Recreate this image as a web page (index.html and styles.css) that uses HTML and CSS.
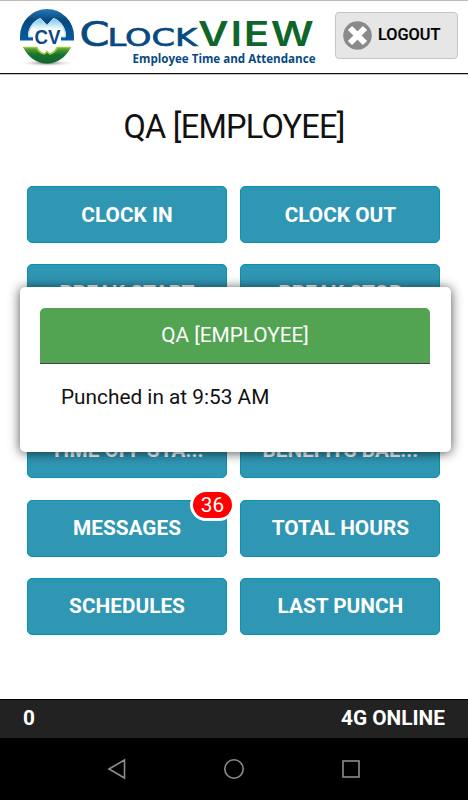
FILE: index.html
```html
<!DOCTYPE html>
<html lang="en">
<head>
  <meta charset="utf-8">
  <title>ClockVIEW</title>
  <link rel="stylesheet" href="styles.css">
</head>
<body>

  <header class="header">
    <svg class="logo" width="310" height="72" viewBox="0 0 310 72">
      <defs>
        <linearGradient id="blue" x1="0" y1="0" x2="0" y2="1">
          <stop offset="0" stop-color="#2878b5"/>
          <stop offset="0.35" stop-color="#07487f"/>
          <stop offset="1" stop-color="#075ba0"/>
        </linearGradient>
        <linearGradient id="glow" x1="0" y1="0" x2="0" y2="1">
          <stop offset="0" stop-color="#6dc3ee"/>
          <stop offset="0.6" stop-color="#fff"/>
        </linearGradient>
        <linearGradient id="green" x1="0" y1="0" x2="0" y2="1">
          <stop offset="0" stop-color="#6fae35"/>
          <stop offset="0.45" stop-color="#187331"/>
          <stop offset="1" stop-color="#11652b"/>
        </linearGradient>
        <radialGradient id="shade">
          <stop offset="0" stop-color="#666"/>
          <stop offset="1" stop-color="#fff" stop-opacity="0"/>
        </radialGradient>
      </defs>
      <ellipse cx="38" cy="62" rx="28" ry="3.5" fill="url(#shade)"/>
      <path d="M11 39.500V35A27 27 0 0 1 65 35V39.500H52V36H57A19 19 0 0 0 44.500 17L38 24L31.500 17A19 19 0 0 0 19 36H24V39.500Z" fill="url(#blue)"/>
      <path d="M24 36H19.500A18.500 19 0 0 1 31.500 17.500L38 24.500L44.500 17.500A18.500 19 0 0 1 56.500 36H52" fill="url(#glow)" stroke="#a5d8f3" stroke-width="1"/>
      <path d="M14 46H28Q31 52 35.500 52.500L38 50L40.500 52.500Q45 52 48 46H62Q54 62 38 62.500Q22 62 14 46Z" fill="url(#green)"/>
      <path d="M14.500 46.500H27.500Q31 52.500 35.500 53L38 50.500L40.500 53Q45 52.500 48.500 46.500H61.500" fill="none" stroke="#9ccb35" stroke-width="1.500"/>
      <text class="logo-cv" x="25.500" y="42.800" textLength="26" lengthAdjust="spacingAndGlyphs">CV</text>
      <text class="logo-clock" x="70.500" y="45" font-size="34" textLength="30" lengthAdjust="spacingAndGlyphs">C</text>
      <text class="logo-clock" x="98.500" y="45" font-size="25.500" textLength="89.500" lengthAdjust="spacingAndGlyphs">LOCK</text>
      <text class="logo-view" transform="scale(1.22 1)" x="155 181.500 192.500 214.500" y="45">VIEW</text>
      <text class="logo-tag" x="123.500" y="61.500" textLength="183" lengthAdjust="spacingAndGlyphs">Employee Time and Attendance</text>
    </svg>
    <button class="logout">
      <svg width="29" height="29" viewBox="0 0 29 29">
        <circle cx="14.500" cy="14.500" r="14.300" fill="#8a8a8a"/>
        <path d="M7 7L22 22M22 7L7 22" stroke="#fff" stroke-width="6"/>
      </svg>
      <span>LOGOUT</span>
    </button>
  </header>

  <main class="content">
    <h1 class="title">QA [EMPLOYEE]</h1>
    <div class="buttons">
      <button class="btn">CLOCK IN</button>
      <button class="btn">CLOCK OUT</button>
      <button class="btn">BREAK START</button>
      <button class="btn">BREAK STOP</button>
      <button class="btn">LUNCH START</button>
      <button class="btn">LUNCH STOP</button>
      <button class="btn">TIME OFF STA...</button>
      <button class="btn">BENEFITS BAL...</button>
      <button class="btn">MESSAGES<span class="badge">36</span></button>
      <button class="btn">TOTAL HOURS</button>
      <button class="btn">SCHEDULES</button>
      <button class="btn">LAST PUNCH</button>
    </div>
  </main>

  <footer class="status">
    <span>0</span>
    <span>4G ONLINE</span>
  </footer>

  <nav class="navbar">
    <svg width="20" height="22" viewBox="0 0 20 22"><path d="M2 11L17.500 2V20Z"/></svg>
    <svg width="22" height="22" viewBox="0 0 22 22"><circle cx="11" cy="11" r="9.200"/></svg>
    <svg width="20" height="22" viewBox="0 0 20 22"><rect x="2" y="3" width="16" height="16"/></svg>
  </nav>

  <div class="dialog">
    <div class="dialog-title">QA [EMPLOYEE]</div>
    <p class="dialog-text">Punched in at 9:53 AM</p>
  </div>

</body>
</html>
```

FILE: styles.css
```css
* {
  box-sizing: border-box;
}

body {
  margin: 0;
  height: 800px;
  display: flex;
  flex-direction: column;
  position: relative;
  background: #fff;
  color: #111;
  font-family: Roboto, sans-serif;
  overflow: hidden;
}

button {
  font-family: inherit;
  margin: 0;
}

.header {
  height: 75px;
  flex: none;
  display: flex;
  justify-content: space-between;
  align-items: flex-start;
  padding: 0 10px 0 9px;
  border-top: 1px solid #bbb;
  border-bottom: 1px solid #c4c4c4;
  box-shadow: inset 0 -1px 0 #111;
}

.logo {
  flex: none;
  overflow: visible;
}

.logo-cv {
  font: bold 20px "Liberation Sans", sans-serif;
  fill: #0d4a85;
}

.logo-clock {
  font-family: "DejaVu Sans", sans-serif;
  fill: #074a82;
  stroke: #074a82;
  stroke-width: 0.7px;
}

.logo-view {
  font: 600 34.5px Inter, sans-serif;
  fill: #0f662b;
}

.logo-tag {
  font: bold 12.5px "Open Sans", sans-serif;
  fill: #074a82;
}

.logout {
  width: 123px;
  height: 47px;
  margin-top: 11px;
  display: flex;
  flex: none;
  align-items: center;
  gap: 6px;
  padding: 0 0 0 7px;
  background: #e6e6e6;
  border: 1px solid #c5c5c5;
  border-radius: 4px;
  color: #000;
  font-size: 16.3px;
  font-weight: 500;
  -webkit-text-stroke: 0.2px #000;
}

.logout span {
  margin-top: -3px;
}

.content {
  flex: 1;
  padding: 33px 27px 0;
}

.title {
  margin: 0;
  height: 78px;
  line-height: 39px;
  font-size: 32.5px;
  font-weight: 400;
  letter-spacing: -0.75px;
  text-align: center;
}

.buttons {
  display: grid;
  grid-template-columns: 200px 200px;
  grid-auto-rows: 57px;
  gap: 21.4px 13.4px;
}

.btn {
  position: relative;
  padding: 0;
  background: #2f96b4;
  border: 1px solid #0792b0;
  border-radius: 5px;
  color: #fff;
  font-size: 20.8px;
  font-weight: 700;
}

.badge {
  position: absolute;
  top: -12px;
  right: -9px;
  width: 45px;
  height: 32px;
  border: 3px solid #fff;
  border-radius: 16px;
  background: #f00;
  font-size: 20.8px;
  font-weight: 400;
  line-height: 26px;
}

.status {
  height: 39px;
  flex: none;
  display: flex;
  justify-content: space-between;
  align-items: center;
  padding: 0 23px 2px;
  background: #222;
  border-top: 1px solid #000;
  color: #fff;
  font-size: 20.8px;
  font-weight: 700;
}

.navbar {
  height: 62px;
  flex: none;
  display: flex;
  justify-content: space-between;
  align-items: center;
  padding: 0 107px;
  background: #000;
}

.navbar svg {
  fill: none;
  stroke: #8d8d8d;
  stroke-width: 1.6;
}

.dialog {
  position: absolute;
  top: 287px;
  left: 20px;
  width: 431px;
  height: 165px;
  padding: 21px 21px 0 20px;
  background: #fff;
  border-radius: 5px;
  box-shadow: 0 1px 12px rgba(0, 0, 0, 0.7);
}

.dialog-title {
  height: 56px;
  line-height: 54px;
  background: #52a352;
  border-bottom: 1px solid #444;
  border-radius: 5px 5px 0 0;
  color: #fff;
  font-size: 20.8px;
  text-align: center;
}

.dialog-text {
  margin: 21px 0 0 21px;
  font-size: 20.8px;
  line-height: 24px;
}
```
